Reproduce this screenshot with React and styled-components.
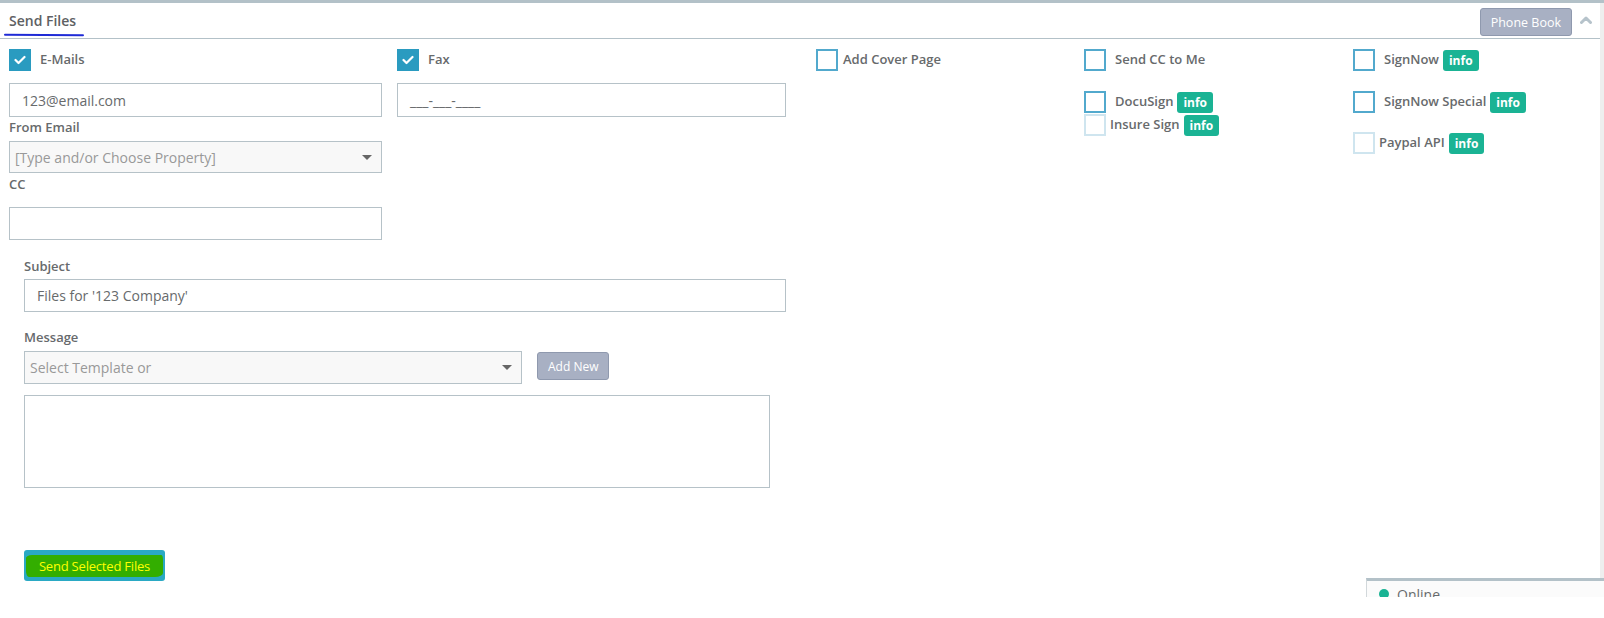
import React from 'react'
import styled, { createGlobalStyle } from 'styled-components'

const GlobalStyle = createGlobalStyle`
  html, body {
    margin: 0;
    padding: 0;
    background: #ffffff;
  }
  body {
    font-family: "Open Sans", "Liberation Sans", Arial, sans-serif;
    color: #676a6c;
  }
`

const Page = styled.div`
  position: relative;
  width: 1604px;
  height: 618px;
  overflow: hidden;
  background: #ffffff;
`

const Frame = styled.div`
  display: flex;
  height: 579px;
  border-top: 3px solid #b3c1c8;
  box-sizing: border-box;
`

const Panel = styled.div`
  flex: 1;
  background: #ffffff;
  display: flex;
  flex-direction: column;
`

const ScrollStrip = styled.div`
  width: 4px;
  background: #eeeeee;
`

const Header = styled.div`
  flex: none;
  height: 35px;
  border-bottom: 1px solid #b3c1c8;
  display: flex;
  align-items: center;
  padding: 0 8px 0 9px;
`

const Title = styled.h5`
  position: relative;
  margin: 0;
  font-size: 14px;
  font-weight: 600;
  color: #5e6163;

  &::after {
    content: '';
    position: absolute;
    left: -5px;
    right: -8px;
    bottom: -6px;
    height: 2px;
    background: #1f2bd6;
    border-radius: 2px;
    transform: rotate(0.4deg);
  }
`

const HeaderTools = styled.div`
  margin-left: auto;
  display: flex;
  align-items: center;
  gap: 8px;
  margin-top: 3px;

  svg {
    margin-bottom: 4px;
  }
`

const GreyButton = styled.button`
  height: ${p => p.$h || 28}px;
  padding: 0 ${p => p.$px || 10}px;
  background: #a8b0c3;
  border: 1px solid #8f99ae;
  border-radius: 3px;
  color: #ffffff;
  font-family: inherit;
  font-size: ${p => p.$fs || 12}px;
  cursor: pointer;
`

const Body = styled.div`
  flex: none;
  padding: 10px 0 0 9px;
  display: flex;
  flex-direction: column;
`

const Grid = styled.div`
  display: grid;
  grid-template-columns: 388px 419px 268px 269px 1fr;
  align-items: start;
`

const Column = styled.div`
  display: flex;
  flex-direction: column;
`

const CheckRow = styled.div`
  display: flex;
  align-items: center;
  height: 22px;
  margin-top: ${p => p.$mt || 0}px;
`

const Box = styled.span`
  width: 22px;
  height: 22px;
  box-sizing: border-box;
  flex: none;
  display: flex;
  align-items: center;
  justify-content: center;
  background: ${p => (p.$checked ? '#2a9bc0' : '#ffffff')};
  border: ${p =>
    p.$checked ? 'none' : p.$faint ? '2px solid #cfe5ef' : '2px solid #52a9cd'};
`

const CheckLabel = styled.span`
  margin-left: ${p => p.$gap ?? 9}px;
  margin-top: -2px;
  font-size: 13px;
  font-weight: 600;
  color: #676a6c;
`

const Badge = styled.span`
  margin-left: 4px;
  background: #1ab394;
  color: #ffffff;
  font-size: 12px;
  font-weight: 700;
  padding: 0 6px;
  height: 21px;
  line-height: 21px;
  border-radius: 3px;
`

const FieldLabel = styled.label`
  display: block;
  font-size: 13px;
  font-weight: 600;
  line-height: 18px;
  color: #676a6c;
  margin-top: ${p => p.$mt || 0}px;
`

const TextInput = styled.div`
  flex: none;
  box-sizing: border-box;
  width: ${p => p.$w}px;
  height: ${p => p.$h || 34}px;
  margin-top: ${p => p.$mt || 0}px;
  border: 1px solid #b6c2c8;
  background: #ffffff;
  display: flex;
  align-items: center;
  padding-left: ${p => p.$pl || 12}px;
  font-size: 14px;
  color: ${p => (p.$muted ? '#999999' : '#676a6c')};
`

const SelectBox = styled(TextInput)`
  background: #f8f8f8;
  padding-right: 9px;
  justify-content: space-between;

  &::after {
    content: '';
    border-left: 5px solid transparent;
    border-right: 5px solid transparent;
    border-top: 5px solid #666666;
  }
`

const Indented = styled.div`
  padding-left: 15px;
  display: flex;
  flex-direction: column;
`

const TemplateRow = styled.div`
  display: flex;
  align-items: flex-start;
  gap: 15px;
  margin-top: 5px;
`

const AddNewSlot = styled.div`
  padding-top: 1px;
`

const TextArea = styled.div`
  flex: none;
  box-sizing: border-box;
  width: 746px;
  height: 93px;
  margin-top: 11px;
  border: 1px solid #b6c2c8;
`

const SendButton = styled.button`
  flex: none;
  margin-top: 62px;
  width: 141px;
  height: 31px;
  padding: 0 2px;
  background: #2aa9c4;
  border: none;
  border-radius: 3px;
  display: flex;
  align-items: center;
  cursor: pointer;
`

const Highlight = styled.span`
  flex: 1;
  height: 22px;
  line-height: 22px;
  background: #33ae00;
  border-radius: 6px 2px 8px 3px / 3px 5px 4px 6px;
  color: #ffff00;
  font-family: "Open Sans", "Liberation Sans", sans-serif;
  font-size: 13px;
  letter-spacing: -0.2px;
  text-align: center;
`

const OnlineWidget = styled.div`
  position: absolute;
  left: 1366px;
  top: 578px;
  width: 240px;
  height: 19px;
  overflow: hidden;
  border-top: 3px solid #b3c1c8;
  border-left: 1px solid #d2d8db;
  background: #fbfbfb;
  display: flex;
  align-items: flex-start;
  padding: 6px 0 0 12px;
  box-sizing: border-box;
  gap: 8px;
`

const Dot = styled.span`
  width: 10px;
  height: 10px;
  border-radius: 50%;
  background: #1ab394;
  flex: none;
  margin-top: 2px;
`

const OnlineText = styled.span`
  font-size: 14px;
  line-height: 16px;
  color: #676a6c;
`

const Tick = () => (
  <svg width="12" height="10" viewBox="0 0 12 10">
    <polyline points="1.5,5 4.5,8 10.5,2" fill="none" stroke="#fff" strokeWidth="2.2" strokeLinecap="round" strokeLinejoin="round" />
  </svg>
)

const ChevronUp = () => (
  <svg width="12" height="8" viewBox="0 0 12 8">
    <polyline points="1.5,6.5 6,2 10.5,6.5" fill="none" stroke="#b6c3cb" strokeWidth="3" strokeLinecap="round" strokeLinejoin="round" />
  </svg>
)

function Check({ label, checked, faint, gap, mt, info }) {
  return (
    <CheckRow $mt={mt}>
      <Box $checked={checked} $faint={faint}>{checked && <Tick />}</Box>
      <CheckLabel $gap={gap}>{label}</CheckLabel>
      {info && <Badge>info</Badge>}
    </CheckRow>
  )
}

export default function App() {
  return (
    <Page>
      <GlobalStyle />
      <Frame>
        <Panel>
          <Header>
            <Title>Send Files</Title>
            <HeaderTools>
              <GreyButton $fs={12.5}>Phone Book</GreyButton>
              <ChevronUp />
            </HeaderTools>
          </Header>
          <Body>
            <Grid>
              <Column>
                <Check label="E-Mails" checked />
                <TextInput $w={373} $mt={12}>123@email.com</TextInput>
                <FieldLabel $mt={1}>From Email</FieldLabel>
                <SelectBox $w={373} $h={32} $mt={5} $pl={5} $muted>
                  [Type and/or Choose Property]
                </SelectBox>
                <FieldLabel $mt={2}>CC</FieldLabel>
                <TextInput $w={373} $h={33} $mt={14} />
              </Column>
              <Column>
                <Check label="Fax" checked />
                <TextInput $w={389} $mt={12}>___-___-____</TextInput>
              </Column>
              <Column>
                <Check label="Add Cover Page" gap={5} />
              </Column>
              <Column>
                <Check label="Send CC to Me" />
                <Check label="DocuSign" mt={20} info />
                <Check label="Insure Sign" faint gap={4} mt={1} info />
              </Column>
              <Column>
                <Check label="SignNow" info />
                <Check label="SignNow Special" mt={20} info />
                <Check label="Paypal API" faint gap={4} mt={19} info />
              </Column>
            </Grid>
            <Indented>
              <FieldLabel $mt={17}>Subject</FieldLabel>
              <TextInput $w={762} $h={33} $mt={4}>Files for '123 Company'</TextInput>
              <FieldLabel $mt={16}>Message</FieldLabel>
              <TemplateRow>
                <SelectBox $w={498} $h={33} $pl={5} $muted>Select Template or</SelectBox>
                <AddNewSlot>
                  <GreyButton $h={28} $px={10} $fs={12}>Add New</GreyButton>
                </AddNewSlot>
              </TemplateRow>
              <TextArea />
              <SendButton>
                <Highlight>Send Selected Files</Highlight>
              </SendButton>
            </Indented>
          </Body>
        </Panel>
        <ScrollStrip />
      </Frame>
      <OnlineWidget>
        <Dot />
        <OnlineText>Online</OnlineText>
      </OnlineWidget>
    </Page>
  )
}
